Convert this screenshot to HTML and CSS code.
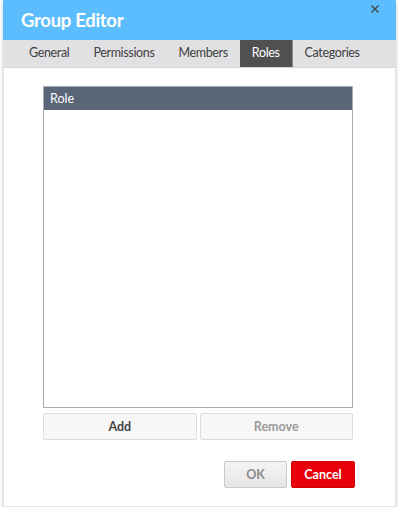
FILE: index.html
```html
<!DOCTYPE html>
<html>
<head>
<meta charset="utf-8">
<link rel="stylesheet" href="styles.css">
</head>
<body>
<div class="dialog">
  <div class="header">
    <h1 class="title">Group Editor</h1>
    <svg class="close" width="8" height="8" viewBox="0 0 8 8"><path d="M0.5 0.5 L7.5 7.5 M7.5 0.5 L0.5 7.5" stroke="#3f4a55" stroke-width="1.4" fill="none"/></svg>
  </div>
  <div class="tabs">
    <span class="tab">General</span>
    <span class="tab">Permissions</span>
    <span class="tab">Members</span>
    <span class="tab active">Roles</span>
    <span class="tab">Categories</span>
  </div>
  <div class="body">
    <div class="grid">
      <div class="grid-head">Role</div>
      <div class="grid-body"></div>
    </div>
    <div class="row-buttons">
      <button class="btn">Add</button>
      <button class="btn disabled">Remove</button>
    </div>
    <div class="footer">
      <button class="btn ok">OK</button>
      <button class="btn cancel">Cancel</button>
    </div>
  </div>
</div>
</body>
</html>
```
FILE: styles.css
```css
html, body { margin: 0; padding: 0; background: #fff; }
body { font-family: Lato, "Open Sans", sans-serif; }
.dialog {
  margin: 0 4px 0 3px;
  width: 393px;
  height: 507px;
  box-sizing: border-box;
  border: 1px solid #e3e3e3;
  border-top: none;
  box-shadow: 0 2px 3px rgba(0,0,0,0.25);
  background: #fff;
  display: flex;
  flex-direction: column;
}
.header {
  height: 40px;
  background: #5bbcfe;
  margin: 0 -1px;
  position: relative;
  display: flex;
  align-items: center;
  padding-left: 18px;
}
.title {
  margin: 0;
  color: #fff;
  font-size: 18.5px;
  font-weight: 700;
  letter-spacing: -0.3px;
}
.close {
  position: absolute;
  right: 17px;
  top: 5px;
}
.tabs {
  height: 27px;
  background: #e1e1e4;
  display: flex;
  padding-left: 13px;
  border-bottom: 1px solid #d4d4d4;
}
.tab {
  font-size: 12.5px;
  letter-spacing: -0.35px;
  color: #404040;
  line-height: 26px;
  padding: 0 12px;
}
.tab.active {
  background: #505050;
  color: #fff;
  border-right: 1px solid #8a8a8a;
}
.body {
  padding: 18px 42px 0 39px;
  display: flex;
  flex-direction: column;
}
.grid {
  height: 322px;
  border: 1px solid #a5acb6;
  display: flex;
  flex-direction: column;
  box-sizing: border-box;
}
.grid-head {
  height: 23px;
  background: #5a6578;
  color: #fff;
  font-size: 12.5px;
  line-height: 23px;
  padding-left: 6px;
}
.grid-body { flex: 1; background: #fff; }
.row-buttons {
  display: flex;
  gap: 3px;
  margin-top: 5px;
}
.btn {
  font-family: Lato, "Open Sans", sans-serif;
  font-size: 12.5px;
  font-weight: 700;
  border: 1px solid #dcdcdc;
  background: #f7f7f7;
  color: #444;
  border-radius: 2px;
  height: 27px;
  padding: 0;
  box-sizing: border-box;
}
.row-buttons .btn { flex: 1; }
.btn.disabled { color: #9a9a9a; }
.footer {
  display: flex;
  justify-content: flex-end;
  gap: 4px;
  margin-top: 21px;
  margin-right: -2px;
}
.btn.ok {
  width: 63px;
  color: #8a8a8a;
  background: linear-gradient(#f4f4f4, #e6e6e6);
  border-color: #c8c8c8;
}
.btn.cancel {
  width: 64px;
  background: #e8000b;
  border-color: #d00000;
  color: #fff;
}
```
